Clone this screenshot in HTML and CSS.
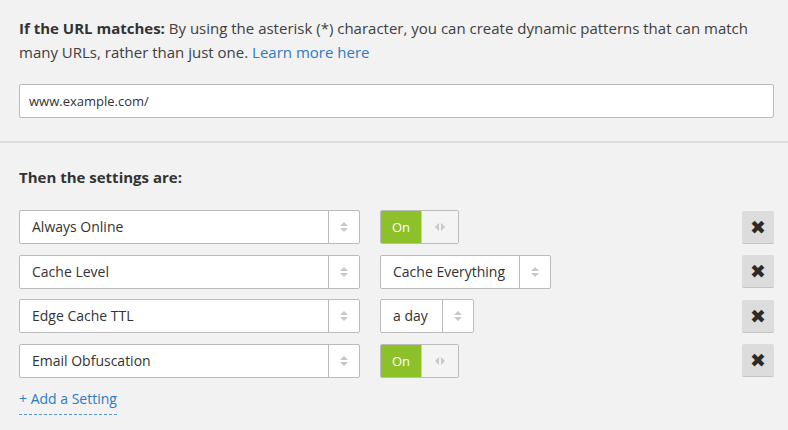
FILE: index.html
```html
<!DOCTYPE html>
<html>
<head>
<meta charset="utf-8">
<link rel="stylesheet" href="styles.css">
</head>
<body>
<section class="match">
  <p class="intro"><strong>If the URL matches:</strong> By using the asterisk (*) character, you can create dynamic patterns that can match many URLs, rather than just one. <a href="#" class="link">Learn more here</a></p>
  <div class="url-input">www.example.com/</div>
</section>
<section class="settings">
  <h3 class="heading">Then the settings are:</h3>
  <div class="rows">
    <div class="row">
      <div class="select name"><span class="label">Always Online</span><span class="arrows"><i class="up"></i><i class="down"></i></span></div>
      <div class="value"><div class="toggle"><span class="on">On</span><span class="knob"><i class="left"></i><i class="right"></i></span></div></div>
      <button class="remove">✖</button>
    </div>
    <div class="row">
      <div class="select name"><span class="label">Cache Level</span><span class="arrows"><i class="up"></i><i class="down"></i></span></div>
      <div class="value"><div class="select small"><span class="label">Cache Everything</span><span class="arrows"><i class="up"></i><i class="down"></i></span></div></div>
      <button class="remove">✖</button>
    </div>
    <div class="row">
      <div class="select name"><span class="label">Edge Cache TTL</span><span class="arrows"><i class="up"></i><i class="down"></i></span></div>
      <div class="value"><div class="select small"><span class="label">a day</span><span class="arrows"><i class="up"></i><i class="down"></i></span></div></div>
      <button class="remove">✖</button>
    </div>
    <div class="row">
      <div class="select name"><span class="label">Email Obfuscation</span><span class="arrows"><i class="up"></i><i class="down"></i></span></div>
      <div class="value"><div class="toggle"><span class="on">On</span><span class="knob"><i class="left"></i><i class="right"></i></span></div></div>
      <button class="remove">✖</button>
    </div>
  </div>
  <a href="#" class="add">+ Add a Setting</a>
</section>
</body>
</html>
```
FILE: styles.css
```css
* { box-sizing: border-box; }
html, body { margin: 0; padding: 0; }
body {
  background: #f2f2f2;
  font-family: "Open Sans", "Noto Sans", sans-serif;
  font-size: 14px;
  color: #333;
  width: 788px;
  height: 430px;
  overflow: hidden;
}
.match {
  padding: 16px 14px 23px 19px;
  border-bottom: 2px solid #dcdcdc;
}
.intro {
  margin: 0;
  font-size: 15px;
  line-height: 24px;
  color: #404040;
}
.intro strong { color: #333; font-weight: 700; }
.link { color: #2f7bbf; text-decoration: none; }
.url-input {
  margin-top: 20px;
  height: 34px;
  background: #fff;
  border: 1px solid #bbb;
  border-radius: 2px;
  padding: 0 9px;
  line-height: 32px;
  font-size: 13px;
  color: #333;
}
.settings {
  padding: 24px 14px 0 19px;
}
.heading {
  margin: 0;
  font-size: 15px;
  font-weight: 700;
  line-height: 20px;
  color: #333;
}
.rows {
  margin-top: 23px;
  display: flex;
  flex-direction: column;
  gap: 10.67px;
}
.row {
  display: flex;
  align-items: center;
  height: 34px;
}
.select {
  display: flex;
  height: 34px;
  background: #fff;
  border: 1px solid #bbb;
  border-radius: 2px;
}
.select .label {
  flex: 1;
  padding-left: 12px;
  line-height: 32px;
  white-space: nowrap;
}
.select.small .label { padding-right: 14px; }
.select .arrows {
  width: 31px;
  border-left: 1px solid #bbb;
  display: flex;
  flex-direction: column;
  align-items: center;
  justify-content: center;
  gap: 2px;
}
.name { width: 341px; }
.up, .down {
  display: block;
  width: 0; height: 0;
  border-left: 4px solid transparent;
  border-right: 4px solid transparent;
}
.up { border-bottom: 4px solid #c8c8c8; }
.down { border-top: 4px solid #c8c8c8; }
.value {
  margin-left: 20px;
  flex: 1;
  display: flex;
}
.toggle {
  display: flex;
  width: 79px;
  height: 34px;
  border: 1px solid #bbb;
  border-radius: 2px;
  overflow: hidden;
}
.toggle .on {
  width: 40px;
  background: #8dc12a;
  color: #fff;
  text-align: center;
  line-height: 32px;
  font-size: 13px;
}
.toggle .knob {
  flex: 1;
  background: #f4f4f4;
  border-left: 1px solid #ccc;
  display: flex;
  align-items: center;
  justify-content: center;
  gap: 2px;
}
.left, .right {
  display: block;
  width: 0; height: 0;
  border-top: 4px solid transparent;
  border-bottom: 4px solid transparent;
}
.left { border-right: 4px solid #c8c8c8; }
.right { border-left: 4px solid #c8c8c8; }
.remove {
  width: 32px;
  height: 33px;
  background: #dcdcdc;
  border: none;
  border-bottom: 1px solid #c4c4c4;
  border-radius: 2px;
  padding: 0;
  color: #2a2a2a;
  font-size: 19px;
  line-height: 32px;
  font-family: "DejaVu Sans", sans-serif;
}
.add {
  display: inline-block;
  margin-top: 11px;
  color: #2f7bbf;
  text-decoration: none;
  font-size: 14px;
  line-height: 20px;
  padding-bottom: 5px;
  border-bottom: 1px dashed #5a95cc;
}
```
